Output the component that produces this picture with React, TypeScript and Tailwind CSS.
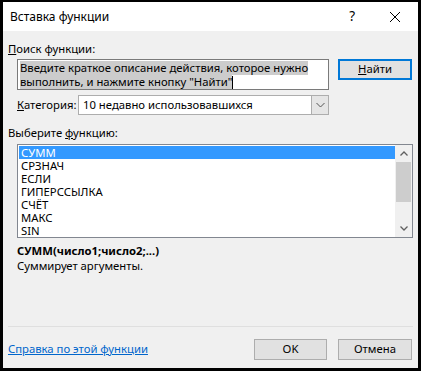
import React from "react";

const F = { fontFamily: '"Noto Sans", "Segoe UI", sans-serif' };

export default function App() {
  const items = ["СУММ", "СРЗНАЧ", "ЕСЛИ", "ГИПЕРССЫЛКА", "СЧЁТ", "МАКС", "SIN"];
  return (
    <div className="w-[421px] h-[371px] bg-black pt-[2px] px-[3px] pb-[3px] text-[11.3px] text-black" style={F}>
      <div className="w-[415px] h-[366px] flex flex-col">
        {/* title bar */}
        <div className="h-[29px] bg-white flex items-center pl-[7px] pr-[16px] shrink-0">
          <span className="text-[12px] flex-1 mt-[1px]">Вставка функции</span>
          <span className="text-[13.5px] mr-[34px]">?</span>
          <svg width="12" height="12" viewBox="0 0 12 12" className="mr-[1px]">
            <path d="M1 1 L11 11 M11 1 L1 11" stroke="#000" strokeWidth="1" />
          </svg>
        </div>
        {/* body */}
        <div className="flex-1 bg-[#f0f0f0] flex flex-col pl-[5px] pr-[5px]">
          <div className="h-[28px] flex items-end pb-[3px] leading-[14px]">
            <span><span className="underline">П</span>оиск функции:</span>
          </div>
          <div className="flex">
            <div className="ml-[9px] w-[312px] h-[31px] bg-white border border-[#7a7a7a] pl-[2px] pt-[1px] leading-[14px] flex flex-col">
              <span className="bg-[#cccccc] self-start">Введите краткое описание действия, которое нужно</span>
              <span className="self-start flex items-center"><span className="bg-[#cccccc]">выполнить, и нажмите кнопку "Найти"</span><span className="inline-block w-[1px] h-[13px] bg-black" /></span>
            </div>
            <div className="ml-[9px] w-[74px] h-[21px] bg-[#e1e1e1] border-2 border-[#0078d7] flex items-center justify-center">
              <span><span className="underline">Н</span>айти</span>
            </div>
          </div>
          <div className="flex items-center mt-[5px] h-[20px]">
            <span className="ml-[9px] w-[61px] whitespace-nowrap"><span className="underline">К</span>атегория:</span>
            <div className="w-[251px] h-[20px] bg-white border border-[#adadad] flex">
              <span className="flex-1 pl-[4px] leading-[18px]">10 недавно использовавшихся</span>
              <div className="w-[17px] h-full bg-[#e5e5e5] border-l border-[#adadad] flex items-center justify-center">
                <svg width="9" height="6" viewBox="0 0 9 6">
                  <path d="M0.5 1 L4.5 5 L8.5 1" stroke="#555" strokeWidth="1" fill="none" />
                </svg>
              </div>
            </div>
          </div>
          <div className="h-[29px] flex items-end pb-[4px] leading-[14px]">
            <span>Выберите <span className="underline">ф</span>ункцию:</span>
          </div>
          <div className="ml-[9px] w-[396px] h-[94px] bg-white border border-[#828790] flex">
            <div className="flex-1 pt-[1px] pl-[1px]">
              {items.map((t, i) => (
                <div
                  key={t}
                  className={
                    i === 0
                      ? "h-[13px] leading-[13px] pl-[2px] bg-[#3399ff] text-white"
                      : "h-[13px] leading-[13px] pl-[2px]"
                  }
                >
                  {t}
                </div>
              ))}
            </div>
            <div className="w-[17px] bg-[#f0f0f0] flex flex-col items-center">
              <div className="h-[17px] flex items-center justify-center">
                <svg width="8" height="5" viewBox="0 0 8 5">
                  <path d="M0.5 4.5 L4 1 L7.5 4.5" stroke="#606060" strokeWidth="1.3" fill="none" />
                </svg>
              </div>
              <div className="w-[15px] h-[40px] bg-[#cdcdcd]" />
              <div className="flex-1" />
              <div className="h-[17px] flex items-center justify-center">
                <svg width="8" height="5" viewBox="0 0 8 5">
                  <path d="M0.5 0.5 L4 4 L7.5 0.5" stroke="#606060" strokeWidth="1.3" fill="none" />
                </svg>
              </div>
            </div>
          </div>
          <div className="ml-[9px] mt-[5px] font-bold leading-[15px]">СУММ(число1;число2;...)</div>
          <div className="ml-[9px] mt-[0px] leading-[15px]">Суммирует аргументы.</div>
          <div className="flex-1" />
          <div className="h-[1px] bg-[#dfdfdf]" />
          <div className="flex h-[41px] pt-[12px]">
            <span className="flex-1 text-[#0066cc] underline leading-[14px] mt-[3px]">Справка по этой функции</span>
            <div className="w-[73px] h-[21px] bg-[#e1e1e1] border border-[#adadad] flex items-center justify-center">OK</div>
            <div className="ml-[11px] w-[74px] h-[21px] bg-[#e1e1e1] border border-[#adadad] flex items-center justify-center mr-[1px]">Отмена</div>
          </div>
        </div>
      </div>
    </div>
  );
}
